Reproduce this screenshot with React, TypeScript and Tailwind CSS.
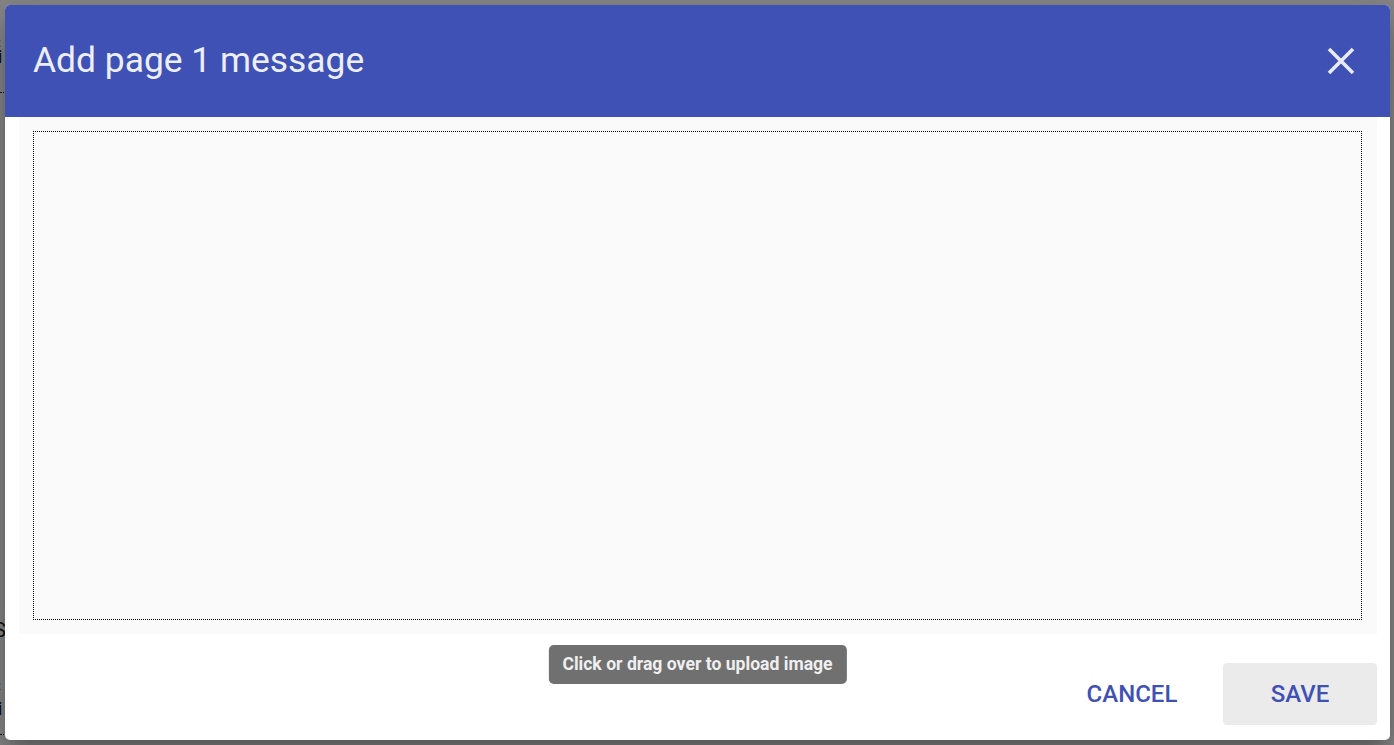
import React from "react";

function CloseIcon() {
  return (
    <svg width="28" height="28" viewBox="0 0 28 28" fill="none">
      <path d="M2 2 L26 26 M26 2 L2 26" stroke="#e8eaf6" strokeWidth="3.6" strokeLinecap="butt" />
    </svg>
  );
}

export default function App() {
  return (
    <div
      className="relative w-[1394px] h-[745px] overflow-hidden bg-white"
      style={{ fontFamily: "Roboto, 'Liberation Sans', sans-serif" }}
    >
      {/* underlying page */}
      <div className="flex flex-col text-[#222] text-[17px] leading-none">
        <div className="h-[36px]" />
        <div className="-ml-[4px] h-[13px] leading-[13px]">‹</div>
        <div className="-ml-[2px] h-[16px] leading-[16px] text-[18px]">i</div>
        <div className="mt-[27px] border-b border-dotted border-[#222] w-[300px]" />
        <div className="mt-[528px] -ml-[6px] text-[20px] h-[18px] leading-[18px]">S</div>
        <div className="mt-[40px] -ml-[4px] h-[13px] leading-[13px]">‹</div>
        <div className="-ml-[2px] mt-[9px] h-[16px] leading-[16px] text-[18px]">i</div>
        <div className="mt-[17px] border-b border-dotted border-[#222] w-[300px]" />
      </div>

      {/* backdrop */}
      <div className="absolute inset-0 bg-black/[0.47]" />

      {/* dialog */}
      <div className="absolute left-[5px] top-[5px] w-[1385px] h-[735px] flex flex-col bg-white rounded-[5px] overflow-hidden shadow-[0_11px_15px_-7px_rgba(0,0,0,0.2),0_24px_38px_3px_rgba(0,0,0,0.14),0_9px_46px_8px_rgba(0,0,0,0.12)]">
        <div className="h-[112px] shrink-0 bg-[#3f51b5] flex items-center justify-between pl-[28px] pr-[35px]">
          <h2 className="text-[35.4px] font-normal text-[#eceef9] leading-none -mt-[1px]">
            Add page 1 message
          </h2>
          <button className="flex items-center justify-center -mt-[1px]">
            <CloseIcon />
          </button>
        </div>

        <div className="px-[14px] pr-[13px]">
          <div className="h-[517px] bg-[#fafafa] pt-[14px] pl-[14px] pr-[15px] pb-[14px]">
            <div className="w-full h-full border border-dotted border-black" />
          </div>
        </div>

        <div className="relative flex-1 flex items-end justify-end gap-[14px] pr-[13px] pb-[15px]">
          <div className="absolute top-[11px] left-1/2 -translate-x-1/2 h-[39px] px-[14px] flex items-center rounded-[5px] bg-[#707070] text-[#efefef] text-[17.6px] font-bold whitespace-nowrap">
            Click or drag over to upload image
          </div>
          <button className="w-[154px] h-[62px] rounded-[4px] flex items-center justify-center text-[24px] font-medium text-[#3f51b5]">
            CANCEL
          </button>
          <button className="w-[154px] h-[62px] rounded-[4px] bg-[#ebebeb] flex items-center justify-center text-[24px] font-medium text-[#3f51b5]">
            SAVE
          </button>
        </div>
      </div>
    </div>
  );
}
